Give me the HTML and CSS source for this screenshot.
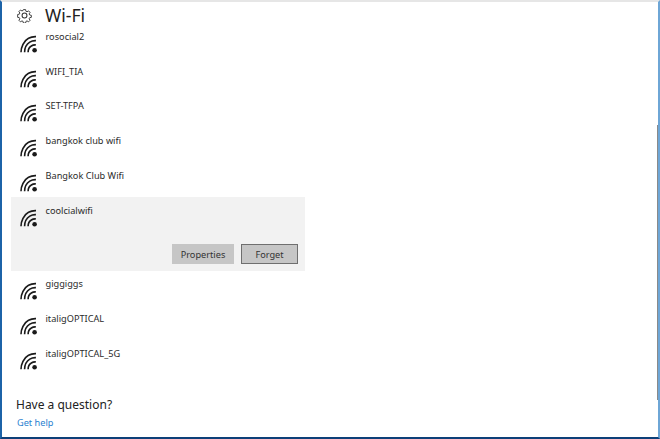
FILE: index.html
```html
<!DOCTYPE html>
<html lang="en">
<head>
<meta charset="utf-8">
<title>Wi-Fi</title>
<link rel="stylesheet" href="styles.css">
</head>
<body>
<svg class="defs" width="0" height="0" aria-hidden="true">
  <symbol id="wifi" viewBox="0 0 18 18">
    <g fill="none" stroke="#1a1a1a" stroke-width="1.6">
      <path d="M1 17.2C1 12.5 3.800 5.800 8.500 3.300C10.800 2 13.500 1.500 16 1.600"/>
      <path d="M4.600 17.200C4.600 13.500 6.300 9.300 9.800 7.100C11.700 5.900 13.800 5.500 15.900 5.600"/>
      <path d="M8.100 17.200C8.100 14.700 9.200 12.300 11.300 11C12.800 10 14.400 9.800 15.800 9.900"/>
    </g>
    <circle cx="14.600" cy="15.300" r="2.300" fill="#1a1a1a"/>
  </symbol>
  <symbol id="gear" viewBox="0 0 16 16">
    <path fill="none" stroke="#333" stroke-width="1.100" stroke-linejoin="round" d="M6.700 1h2.600l.4 2 1.300.6 1.800-1.100 1.800 1.800-1.100 1.800.6 1.300 2 .4v2.400l-2 .4-.6 1.300 1.100 1.800-1.800 1.800-1.800-1.100-1.300.6-.4 2H6.700l-.4-2-1.300-.6-1.800 1.100-1.800-1.800 1.100-1.800-.6-1.300-2-.4V6.800l2-.4.6-1.300-1.100-1.800 1.800-1.800 1.800 1.100 1.300-.6z" transform="translate(.8 .8) scale(.9)"/>
    <circle cx="8" cy="8" r="2.600" fill="none" stroke="#333" stroke-width="1.100"/>
  </symbol>
</svg>
<main class="window">
  <header class="title-bar">
    <svg class="gear"><use href="#gear"/></svg>
    <h1 class="title">Wi-Fi</h1>
  </header>
  <ul class="networks">
    <li class="network"><svg class="wifi"><use href="#wifi"/></svg><span class="name">rosocial2</span></li>
    <li class="network"><svg class="wifi"><use href="#wifi"/></svg><span class="name">WIFI_TIA</span></li>
    <li class="network"><svg class="wifi"><use href="#wifi"/></svg><span class="name">SET-TFPA</span></li>
    <li class="network"><svg class="wifi"><use href="#wifi"/></svg><span class="name">bangkok club wifi</span></li>
    <li class="network"><svg class="wifi"><use href="#wifi"/></svg><span class="name">Bangkok Club Wifi</span></li>
    <li class="selected">
      <div class="network network-open"><svg class="wifi"><use href="#wifi"/></svg><span class="name">coolcialwifi</span></div>
      <div class="actions">
        <button class="btn" type="button">Properties</button>
        <button class="btn btn-focus" type="button">Forget</button>
      </div>
    </li>
    <li class="network"><svg class="wifi"><use href="#wifi"/></svg><span class="name">giggiggs</span></li>
    <li class="network"><svg class="wifi"><use href="#wifi"/></svg><span class="name">italigOPTICAL</span></li>
    <li class="network"><svg class="wifi"><use href="#wifi"/></svg><span class="name">italigOPTICAL_5G</span></li>
  </ul>
  <section class="help">
    <h2 class="help-title">Have a question?</h2>
    <a class="help-link" href="#">Get help</a>
  </section>
  <div class="scrollbar"></div>
</main>
</body>
</html>
```
FILE: styles.css
```css
* { box-sizing: border-box; }
html, body { margin: 0; height: 100%; }
body {
  background: #fff;
  font-family: "Noto Sans", "Open Sans", sans-serif;
  color: #222;
  overflow: hidden;
}
.defs { position: absolute; }
.window {
  position: relative;
  width: 660px;
  height: 439px;
  display: flex;
  flex-direction: column;
  padding: 0 0 0 9px;
  border-top: 2px solid #e6e6e6;
  border-left: 2px solid #1c63a8;
  border-right: 2px solid #6ea6d6;
  border-bottom: 2px solid #0d3f78;
}
.title-bar {
  display: flex;
  align-items: center;
  height: 26px;
  padding-left: 6px;
  gap: 13px;
}
.gear { width: 15px; height: 15px; }
.title {
  margin: 0;
  font-size: 17.500px;
  font-weight: 400;
  line-height: 26px;
  color: #222;
}
.networks {
  list-style: none;
  margin: 0;
  padding: 0;
  width: 294px;
  flex: none;
}
.network {
  display: flex;
  height: 34.700px;
  padding: 2px 0 0 9px;
}
.network-open { padding-top: 7px; }
.wifi { width: 18px; height: 18px; margin-top: 5px; flex: none; }
.name {
  margin-left: 7.500px;
  font-size: 9.200px;
  line-height: 13px;
  color: #2b2b2b;
}
.selected {
  background: #f2f2f2;
  height: 74px;
  margin: -4px 0 0;
  display: flex;
  flex-direction: column;
  justify-content: space-between;
}
.selected + .network { margin-top: 4px; }
.actions {
  display: flex;
  justify-content: flex-end;
  gap: 7px;
  padding: 0 7px 7px 0;
}
.btn {
  height: 20px;
  padding: 0;
  font: inherit;
  font-size: 9.200px;
  color: #333;
  background: #c6c6c6;
  border: 0;
  width: 62px;
}
.btn-focus {
  width: 57px;
  border: 1px solid #6f6f6f;
}
.help { margin-top: 16px; padding-left: 5px; }
.help-title {
  margin: 0;
  font-size: 12px;
  font-weight: 400;
  line-height: 18px;
  color: #222;
}
.help-link {
  display: block;
  margin: 2px 0 0 1px;
  font-size: 9.200px;
  line-height: 14px;
  color: #2a7fd0;
  text-decoration: none;
}
.scrollbar {
  position: absolute;
  right: 0;
  top: 123px;
  width: 1.500px;
  height: 275px;
  background: #8a8a8a;
}
```
